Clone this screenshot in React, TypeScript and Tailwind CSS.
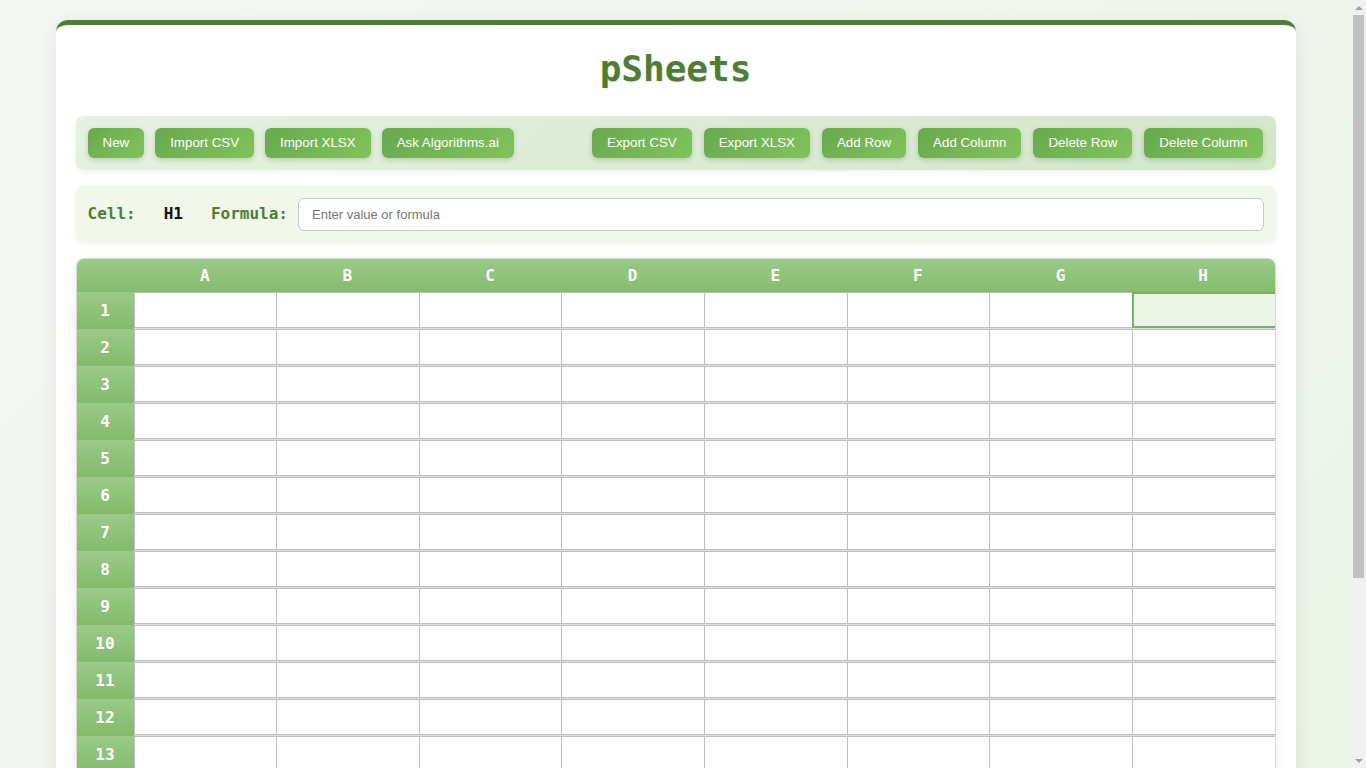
import React from "react";

const leftButtons = ["New", "Import CSV", "Import XLSX", "Ask Algorithms.ai"];
const rightButtons = ["Export CSV", "Export XLSX", "Add Row", "Add Column", "Delete Row", "Delete Column"];
const cols = ["A", "B", "C", "D", "E", "F", "G", "H"];
const rows = Array.from({ length: 18 }, (_, i) => i + 1);

function Btn({ label }: { label: string }) {
  return (
    <button className="rounded-[6px] bg-[linear-gradient(135deg,#69a94f,#80c35d)] px-[15px] py-[7px] text-[13.33px] leading-[16px] text-white shadow-[0_2px_5px_rgba(60,110,40,0.25)] font-['Liberation_Sans',Arial,sans-serif]">
      {label}
    </button>
  );
}

function FakeScrollbar() {
  return (
    <div className="fixed right-0 top-0 flex h-screen w-[15px] flex-col bg-[#f1f1f1]">
      <div className="flex h-[15px] items-center justify-center">
        <div className="h-0 w-0 border-x-[4px] border-b-[4px] border-x-transparent border-b-[#a3a3a3]" />
      </div>
      <div className="mx-[2px] h-[563px] bg-[#c1c1c1]" />
      <div className="flex-1" />
      <div className="flex h-[15px] items-center justify-center">
        <div className="h-0 w-0 border-x-[4px] border-t-[4px] border-x-transparent border-t-[#a3a3a3]" />
      </div>
    </div>
  );
}

export default function App() {
  const mono = "font-['DejaVu_Sans_Mono',monospace]";
  return (
    <div className="min-h-screen bg-[linear-gradient(135deg,#f5f7f4,#ebf4e6)] pr-[15px]">
      <div className="py-5">
        <div className="mx-auto w-[1240px] overflow-hidden rounded-[12px] border-t-[5px] border-[#4e7d36] bg-white px-5 pb-6 pt-[23px] shadow-[0_4px_20px_rgba(0,0,0,0.08)]">
          <h1 className={`${mono} mb-[26px] text-center text-[36px] font-bold leading-[42px] text-[#4e7d36] [text-shadow:1px_1px_2px_rgba(0,0,0,0.08)]`}>
            pSheets
          </h1>

          <div className="mb-4 flex h-[54px] items-center justify-between rounded-[8px] bg-[linear-gradient(135deg,#e6f1e1,#d3e6ca)] px-[12px] shadow-[0_2px_6px_rgba(0,0,0,0.06)]">
            <div className="flex gap-[11px]">
              {leftButtons.map((b) => (
                <Btn key={b} label={b} />
              ))}
            </div>
            <div className="flex gap-[12px] pr-px">
              {rightButtons.map((b) => (
                <Btn key={b} label={b} />
              ))}
            </div>
          </div>

          <div className="mb-4 flex h-[56px] items-center rounded-[8px] bg-[#f1f7ea] px-[12px] shadow-[0_2px_6px_rgba(0,0,0,0.05)]">
            <span className={`${mono} text-[16px] font-bold text-[#4e7d36]`}>Cell:</span>
            <span className={`${mono} ml-[28px] text-[16px] font-bold text-[#111]`}>H1</span>
            <span className={`${mono} ml-[28px] text-[16px] font-bold text-[#4e7d36]`}>Formula:</span>
            <input
              className="ml-[10px] h-[33px] flex-1 rounded-[6px] border border-[#c6c6c6] bg-white px-[13px] text-[13px] text-[#333] outline-none placeholder:text-[#777] font-['Liberation_Sans',Arial,sans-serif]"
              placeholder="Enter value or formula"
            />
          </div>

          <div className="overflow-hidden rounded-[8px] border border-[#d8d8d8] shadow-[0_2px_8px_rgba(0,0,0,0.08)]">
            <div className="flex h-[33px] bg-[linear-gradient(180deg,#9bca88,#86bb6f)]">
              <div className="w-[57px] shrink-0" />
              <div className="grid flex-1 grid-cols-8">
                {cols.map((c) => (
                  <div key={c} className={`${mono} flex items-center justify-center text-[16px] font-bold text-white`}>
                    {c}
                  </div>
                ))}
              </div>
            </div>
            {rows.map((r) => (
              <div key={r} className="flex h-[37px]">
                <div className={`${mono} flex w-[57px] shrink-0 items-center justify-center bg-[linear-gradient(180deg,#9bca88,#84ba6c)] text-[16px] font-bold text-white`}>
                  {r}
                </div>
                <div className="grid flex-1 grid-cols-8 bg-[#dedede] pb-px">
                  {cols.map((c) =>
                    r === 1 && c === "H" ? (
                      <div key={c} className="border-y-2 border-l-2 border-[#7ab260] bg-[#ebf5e8]" />
                    ) : (
                      <div key={c} className="border-y border-l border-[#bfbfbf] bg-white" />
                    )
                  )}
                </div>
              </div>
            ))}
          </div>
        </div>
      </div>
      <FakeScrollbar />
    </div>
  );
}
